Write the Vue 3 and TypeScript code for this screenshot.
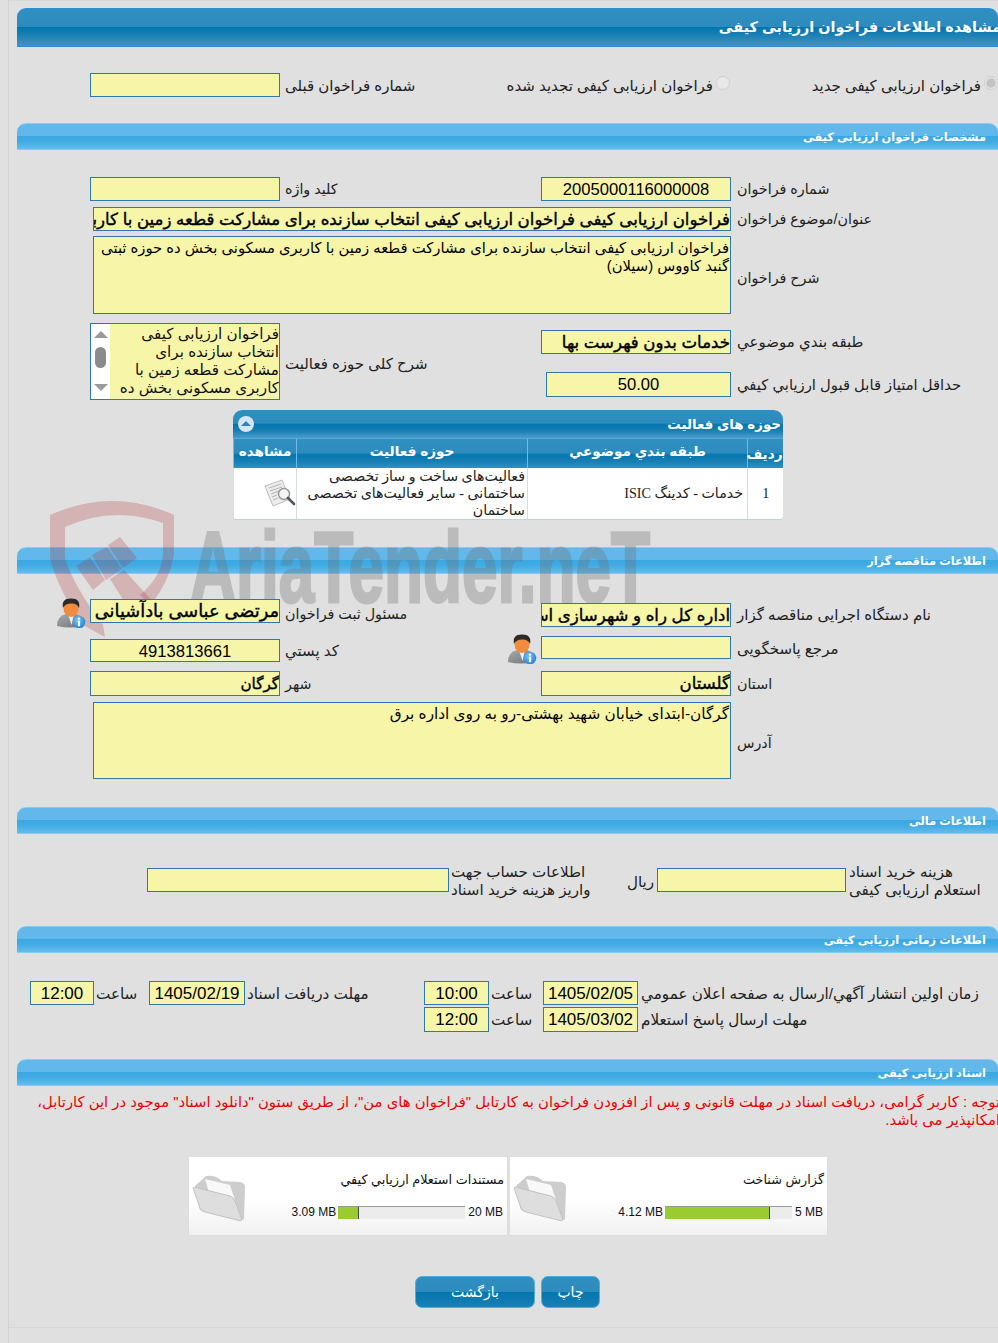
<script setup lang="ts">
interface Doc { title: string; used: string; max: string; pct: number }
const docs: Doc[] = [
  { title: 'مستندات استعلام ارزیابي کیفي', used: '3.09 MB', max: '20 MB', pct: 16.5 },
  { title: 'گزارش شناخت', used: '4.12 MB', max: '5 MB', pct: 83 }
]
</script>

<template>
  <div class="page">
    <div class="frame">
      <div class="band band-main"><span class="main-title">مشاهده اطلاعات فراخوان ارزیابی کیفی</span></div>

      <div class="radios">
        <div class="prev">
          <div class="field w190"></div>
          <span class="label ml5 fs15 nudge">شماره فراخوان قبلی</span>
        </div>
        <div class="radio-opt r2"><span class="radio"></span><span>فراخوان ارزیابی کیفی تجدید شده</span></div>
        <div class="radio-opt r1"><span class="radio on"></span><span>فراخوان ارزیابی کیفی جدید</span></div>
      </div>

      <div class="band band-light"><span>مشخصات فراخوان ارزیابی کیفی</span></div>

      <div class="halves mt27">
        <div class="half-l"><div class="field w190"></div><span class="label ml5">کلید واژه</span></div>
        <div class="half-r"><div class="field w190 num">2005000116000008</div><span class="label ml6">شماره فراخوان</span></div>
      </div>
      <div class="wide mt6">
        <div class="field wide-field bold">فراخوان ارزیابی کیفی فراخوان ارزیابی کیفی انتخاب سازنده برای مشارکت قطعه زمین با کاربری مسکونی</div>
        <span class="label ml6">عنوان/موضوع فراخوان</span>
      </div>
      <div class="wide mt5">
        <div class="field wide-field area tight">فراخوان ارزیابی کیفی انتخاب سازنده برای مشارکت قطعه زمین با کاربری مسکونی بخش ده حوزه ثبتی گنبد کاووس (سیلان)</div>
        <span class="label ml6 low">شرح فراخوان</span>
      </div>

      <div class="halves mt9 h77">
        <div class="half-l center">
          <div class="listbox">
            <div class="sb">
              <i class="arr up"></i>
              <i class="thumb"></i>
              <i class="arr down"></i>
            </div>
            <div class="lb-text">فراخوان ارزیابی کیفی<br />انتخاب سازنده برای<br />مشارکت قطعه زمین با<br />کاربری مسکونی بخش ده</div>
          </div>
          <span class="label ml5 fs15 low">شرح کلی حوزه فعالیت</span>
        </div>
        <div class="half-stack">
          <div class="half-r mt7"><div class="field w190 bold">خدمات بدون فهرست بها</div><span class="label ml6 fs15">طبقه بندي موضوعي</span></div>
          <div class="half-r mt18"><div class="field w185 num h25f">50.00</div><span class="label ml6 fs148">حداقل امتياز قابل قبول ارزيابي کيفي</span></div>
        </div>
      </div>

      <div class="grid-box">
        <div class="grid-title">
          <span class="collapse"><i></i></span>
          <span>حوزه های فعالیت</span>
        </div>
        <table class="grid-table">
          <colgroup>
            <col class="c1" /><col class="c2" /><col class="c3" /><col class="c4" />
          </colgroup>
          <thead>
            <tr>
              <th>مشاهده</th>
              <th class="th-c">حوزه فعالیت</th>
              <th class="th-c">طبقه بندي موضوعي</th>
              <th class="th-r">ردیف</th>
            </tr>
          </thead>
          <tbody>
            <tr>
              <td class="td-icon">
                <svg class="doc-icon" viewBox="0 0 32 30" width="32" height="30">
                  <path d="M1 7 L18 1 L26 20 L9 27 Z" fill="#ececec" stroke="#bdbdbd" />
                  <path d="M5 9 L17 5 M6 12 L18 8 M7 15 L15 12 M8 18 L13 16 M9 21 L14 19" stroke="#b5b5b5" stroke-width="1" />
                  <circle cx="20" cy="15" r="5.5" fill="#f4f4f4" stroke="#9a9a9a" stroke-width="1.5" />
                  <path d="M24 19 L30 25" stroke="#555" stroke-width="2.6" stroke-linecap="round" />
                </svg>
              </td>
              <td class="td-text">فعالیت‌های ساخت و ساز تخصصی ساختمانی - سایر فعالیت‌های تخصصی ساختمان</td>
              <td class="td-text td-mid">خدمات - کدینگ ISIC</td>
              <td class="td-num">1</td>
            </tr>
          </tbody>
        </table>
      </div>

      <div class="band band-light mt28"><span>اطلاعات مناقصه گزار</span></div>

      <div class="halves">
        <div class="stack-l">
          <div class="half-l mt25">
            <svg class="person pl" viewBox="0 0 30 30" width="30" height="30">
              <use href="#person-shape" />
            </svg>
            <div class="field w190 bold name">مرتضی عباسی بادآشیانی</div>
            <span class="label ml5 low">مسئول ثبت فراخوان</span>
          </div>
          <div class="half-l mt16"><div class="field w190 num h23f">4913813661</div><span class="label ml5 fs15">کد پستي</span></div>
          <div class="half-l mt9"><div class="field w190 bold h25f city">گرگان</div><span class="label ml5">شهر</span></div>
        </div>
        <div class="stack-r">
          <div class="half-r mt29"><div class="field w190 bold">اداره کل راه و شهرسازی استان گلستان</div><span class="label ml6 fs15">نام دستگاه اجرایی مناقصه گزار</span></div>
          <div class="half-r mt9">
            <svg class="person pr" viewBox="0 0 30 30" width="30" height="30">
              <defs>
                <linearGradient id="suit-grad" x1="0" y1="0" x2="1" y2="1">
                  <stop offset="0" stop-color="#a8abad" />
                  <stop offset="1" stop-color="#6e7274" />
                </linearGradient>
                <radialGradient id="info-grad" cx=".4" cy=".35" r=".7">
                  <stop offset="0" stop-color="#7cc4f6" />
                  <stop offset="1" stop-color="#1f7fd6" />
                </radialGradient>
                <g id="person-shape">
                  <path d="M1 28 Q1 18 10 16 L20 16 Q27 18 28 28 Q14 31 1 28 Z" fill="url(#suit-grad)" />
                  <path d="M12 16 L18 16 L15.5 27 Z" fill="#eef1f3" />
                  <ellipse cx="15" cy="10.5" rx="7.5" ry="8.5" fill="#f28b3e" />
                  <path d="M7 10 Q5 0.5 15 0.5 Q25 0.5 23 10 Q21 5 15 5.5 Q9 5.5 7 10 Z" fill="#2e2a28" />
                  <circle cx="23" cy="24" r="6.3" fill="url(#info-grad)" />
                  <circle cx="23" cy="20.6" r="1.2" fill="#fff" />
                  <rect x="21.9" y="22.6" width="2.2" height="5.6" fill="#fff" />
                </g>
              </defs>
              <use href="#person-shape" />
            </svg>
            <div class="field w190 h23f"></div><span class="label ml6 fs15 nudge">مرجع پاسخگویی</span>
          </div>
          <div class="half-r mt12"><div class="field w190 bold h25f">گلستان</div><span class="label ml6">استان</span></div>
        </div>
      </div>

      <div class="wide mt6">
        <div class="field wide-field area h77f">گرگان-ابتدای خیابان شهید بهشتی-رو به روی اداره برق</div>
        <span class="label ml6 low">آدرس</span>
      </div>

      <div class="band band-light mt28"><span>اطلاعات مالی</span></div>

      <div class="finance">
        <i></i>
        <div class="field f302"></div>
        <span class="label fl1">اطلاعات حساب جهت<br />واریز هزینه خرید اسناد</span>
        <span class="label rial">ریال</span>
        <div class="field f189"></div>
        <span class="label fl2">هزینه خرید اسناد<br />استعلام ارزیابی کیفی</span>
      </div>

      <div class="band band-light"><span>اطلاعات زمانی ارزیابی کیفی</span></div>

      <div class="times mt28">
        <i></i>
        <div class="field num">12:00</div>
        <span class="label tl">ساعت</span>
        <div class="field num">1405/02/19</div>
        <span class="label tl">مهلت دریافت اسناد</span>
        <div class="field num">10:00</div>
        <span class="label tl">ساعت</span>
        <div class="field num">1405/02/05</div>
        <span class="label tl t-last">زمان اولین انتشار آگهي/ارسال به صفحه اعلان عمومي</span>
      </div>
      <div class="times mt2">
        <i></i><i></i><i></i><i></i><i></i>
        <div class="field num h25f">12:00</div>
        <span class="label tl">ساعت</span>
        <div class="field num h25f">1405/03/02</div>
        <span class="label tl t-last">مهلت ارسال پاسخ استعلام</span>
      </div>

      <div class="band band-light mt27"><span>اسناد ارزیابی کیفی</span></div>

      <p class="notice">توجه : کاربر گرامی، دریافت اسناد در مهلت قانونی و پس از افزودن فراخوان به کارتابل "فراخوان های من"، از طریق ستون "دانلود اسناد" موجود در این کارتابل، امکانپذیر می باشد.</p>

      <div class="cards">
        <div v-for="d in docs" :key="d.title" class="card">
          <svg class="folder" viewBox="0 0 56 50" width="56" height="50">
            <path d="M3 13 L14 3 Q24 2 30 8 L48 9 Q53 10 53 14 L52 46 Q50 48 46 46 L10 38 Q7 37 7 33 Z" fill="#cdcdcd" />
            <path d="M13 6 L38 12 L46 36 L20 30 Z" fill="#f8f8f8" />
            <path d="M1 15 Q3 13 6 15 L38 23 Q41 24 43 28 L50 47 Q48 48 45 47 L13 39 Q9 38 8 35 Z" fill="#dedede" stroke="#c2c2c2" stroke-width="1" />
          </svg>
          <div class="card-body">
            <div class="card-title">{{ d.title }}</div>
            <div class="meter">
              <span class="m-val">{{ d.used }}</span>
              <div class="bar"><div class="bar-fill" :style="{ width: d.pct + '%' }"></div></div>
              <span class="m-val m-max">{{ d.max }}</span>
            </div>
          </div>
        </div>
      </div>

      <div class="buttons">
        <button class="btn btn-back" type="button">بازگشت</button>
        <button class="btn btn-print" type="button">چاپ</button>
      </div>

      <div class="foot-line"></div>

      <svg class="watermark" viewBox="0 0 620 150" width="620" height="150">
        <g fill="#b02a30" fill-opacity=".25">
          <path d="M10 20 Q73 -8 134 20 L134 60 Q128 90 110 110 L100 100 Q123 80 123 58 L123 28 Q73 10 25 32 L25 63 Q33 90 63 130 L65 142 L43 130 Q18 95 10 63 Z" />
          <path d="M36 71 L50 62 L65 85 L53 95 Z" />
          <path d="M52 60 L67 52 L82 74 L66 85 Z" />
          <path d="M68 50 L80 42 L97 63 L83 73 Z" />
          <path d="M70 84 L84 75 L118 112 L98 128 Z" />
        </g>
        <text x="150" y="107" class="wm-text" textLength="460" lengthAdjust="spacingAndGlyphs">AriaTender.neT</text>
      </svg>
    </div>
  </div>
</template>

<style>
html, body { margin: 0; background: #e0e0e0; }
</style>

<style scoped>
.page {
  width: 998px;
  height: 1343px;
  overflow: hidden;
  background: #e0e0e0;
  font-family: "Liberation Sans", "DejaVu Sans", sans-serif;
  font-size: 14.3px;
  color: #222;
}
.frame {
  position: relative;
  box-sizing: border-box;
  height: 1343px;
  margin-left: 8px;
  padding: 8px 0 0 8px;
  border-left: 1px solid #d2d2d2;
  border-top: 1px solid #d8d8d8;
}
.band {
  box-sizing: border-box;
  display: flex;
  justify-content: flex-start;
  align-items: center;
  color: #fff;
  font-weight: bold;
  direction: rtl;
  border-radius: 9px 9px 0 0;
}
.band-main {
  height: 39px;
  margin-top: -1px;
  font-size: 14.4px;
  overflow: hidden;
  background: linear-gradient(#2f8fc0 0, #2d8cbd 48%, #0376b0 50%, #1a80b4 70%, #4694bd 100%);
  border-top: 1px solid #2a8fe0;
  border-bottom: 1px solid #2a8fe0;
}
.main-title { margin: -1px -3px 0 0; }
.band-light {
  height: 27px;
  font-size: 11.4px;
  padding-right: 12px;
  background: linear-gradient(#62b8ea 0, #62b8ea 46%, #3aa8e3 50%, #42abe4 70%, #66bbea 100%);
  border-top: 1px solid #7fd0f0;
  border-bottom: 1px solid #7fcfee;
}

.label { direction: rtl; text-align: left; white-space: nowrap; line-height: 18px; }
.fs15 { font-size: 15px; }
.fs148 { font-size: 14.8px; }
.low { margin-top: 5px; }
.nudge { margin-top: 2px; }
.ml5 { margin-left: 5px; }
.ml6 { margin-left: 6px; }
.mt2 { margin-top: 2px; }
.mt5 { margin-top: 5px; }
.mt6 { margin-top: 6px; }
.mt7 { margin-top: 7px; }
.mt9 { margin-top: 9px; }
.mt12 { margin-top: 12px; }
.mt16 { margin-top: 16px; }
.mt18 { margin-top: 18px; }
.mt25 { margin-top: 25px; }
.mt27 { margin-top: 27px; }
.mt28 { margin-top: 28px; }
.mt29 { margin-top: 29px; }
.h77 { height: 77px; }

.field {
  position: relative;
  z-index: 1;
  box-sizing: border-box;
  height: 24px;
  line-height: 23px;
  background: #f7f5a8;
  border: 1px solid #2a7ab0;
  direction: rtl;
  text-align: right;
  white-space: nowrap;
  overflow: hidden;
  color: #000;
  font-size: 15.3px;
}
.h25f { height: 25px; }
.h23f { height: 23px; }
.w190 { width: 190px; }
.w185 { width: 185px; }
.bold {
  font-size: 16.6px;
  -webkit-text-stroke: .4px #000;
}
.bold.name { font-size: 17.8px; }
.bold.city { font-size: 15.2px; }
.num { text-align: center; font-size: 16.6px; }

.radios {
  position: relative;
  height: 76px;
  box-sizing: border-box;
  padding-top: 26px;
}
.prev { display: flex; align-items: center; margin-left: 73px; }
.radio-opt {
  position: absolute;
  top: 29px;
  display: flex;
  flex-direction: row-reverse;
  direction: ltr;
  gap: 3px;
  white-space: nowrap;
  line-height: 18px;
  font-size: 15px;
}
.r1 { right: 0; }
.r2 { right: 268px; }
.radio-opt span:last-child { direction: rtl; margin-top: 1px; }
.radio {
  flex: none;
  box-sizing: border-box;
  width: 14px;
  height: 14px;
  margin-top: 0;
  border-radius: 50%;
  background: #e9e9e9;
  border: 1px solid #d0d0d0;
}
.radio.on { background: radial-gradient(circle, #c4c4c4 0 50%, #e4e4e4 60%); }

.halves { display: flex; }
.half-l { width: 488px; display: flex; align-items: center; padding-left: 73px; box-sizing: border-box; position: relative; }
.half-r { display: flex; align-items: center; padding-left: 36px; position: relative; }
.half-stack, .stack-r { width: 493px; }
.half-stack .half-r:last-child { padding-left: 41px; }
.center { align-items: center; }
.stack-l { width: 488px; }

.wide { display: flex; align-items: center; padding-left: 76px; }
.wide-field { width: 638px; }
.wide-field.area {
  height: 78px;
  white-space: normal;
  line-height: 18px;
  padding: 2px 1px;
}
.wide-field.area.tight { font-size: 14.8px; }
.wide-field.area.h77f { height: 77px; }

.listbox {
  box-sizing: border-box;
  width: 190px;
  height: 77px;
  display: flex;
  border: 1px solid #2a7ab0;
  background: #f7f5a8;
}
.sb { width: 19px; background: #fff; position: relative; flex: none; }
.sb i { position: absolute; display: block; }
.thumb { left: 4px; top: 23px; width: 11px; height: 21px; border-radius: 6px; background: #8b8b8b; }
.arr { left: 3px; width: 0; height: 0; border-left: 7px solid transparent; border-right: 7px solid transparent; }
.arr.up { top: 7px; border-bottom: 7px solid #999; }
.arr.down { top: 60px; border-top: 7px solid #999; }
.lb-text { flex: 1; direction: rtl; text-align: right; line-height: 18px; color: #111; white-space: nowrap; font-size: 15.2px; margin-top: 1px; }

.grid-box {
  width: 550px;
  margin: 10px 0 0 216px;
  box-sizing: border-box;
  height: 109px;
  border-radius: 9px 9px 3px 3px;
  overflow: hidden;
  box-shadow: 0 1px 0 #b9d3e6;
  background: #fff;
}
.grid-title {
  height: 28px;
  display: flex;
  justify-content: space-between;
  align-items: center;
  padding: 0 2px 0 5px;
  color: #fff;
  font-weight: bold;
  font-size: 13.4px;
  direction: ltr;
  background: linear-gradient(#2f8fc0 0, #2d8cbd 46%, #0376b0 52%, #1a80b4 75%, #4a9cc9 100%);
}
.grid-title span:last-child { direction: rtl; }
.collapse {
  width: 16px;
  height: 16px;
  border-radius: 50%;
  background: #d5e6f4;
  display: flex;
  align-items: center;
  justify-content: center;
}
.collapse i {
  width: 0;
  height: 0;
  margin-top: -2px;
  border-left: 5px solid transparent;
  border-right: 5px solid transparent;
  border-bottom: 5px solid #2a86bd;
}
.grid-table {
  width: 550px;
  table-layout: fixed;
  border-collapse: collapse;
  direction: ltr;
}
.c1 { width: 63px; }
.c2 { width: 231px; }
.c3 { width: 220px; }
.c4 { width: 36px; }
.grid-table th {
  height: 29px;
  padding: 0 1px 5px;
  box-sizing: border-box;
  color: #fff;
  font-size: 13.6px;
  direction: rtl;
  background: linear-gradient(#2f8fc0 0, #2d8cbd 46%, #0376b0 52%, #1a80b4 78%, #2f94c8 100%);
  border-left: 1px solid #6bbcea;
  border-top: 1px solid #56a8da;
}
.grid-table th:first-child { border-left-color: #6bbcea; text-align: center; }
.th-c { text-align: center; }
.grid-table th.th-r { text-align: right; padding: 2px 1px 0 0; }
.grid-table td {
  height: 52px;
  padding: 0 2px;
  border-left: 1px solid #d6dde2;
  font-family: "Liberation Serif", "DejaVu Sans", serif;
  font-size: 14.2px;
  line-height: 17px;
  color: #222;
  vertical-align: middle;
}
.td-icon { text-align: right; }
.doc-icon { display: block; margin-left: 28px; }
.td-text { direction: rtl; text-align: right; }
.grid-table td.td-mid { padding-right: 4px; }
.td-num { text-align: center; }

.person { position: absolute; z-index: 1; }
.pl { left: 39px; top: -1px; }
.pr { left: 2px; top: -2px; }

.finance {
  display: grid;
  grid-template-columns: 130px 302px 179px 29px 189px 1fr;
  align-items: center;
  height: 92px;
  font-size: 15.1px;
}
.fl1 { margin: 2px 0 0 2px; }
.fl2 { margin: 2px 0 0 3px; }
.rial { margin-left: -1px; margin-top: 4px; }
.f302, .f189 { width: 100%; }

.times {
  display: grid;
  grid-template-columns: 13px 64px 55px 96px 179px 65px 54px 95px 1fr;
  align-items: center;
  font-size: 15.2px;
}
.times .field { font-size: 17px; }
.tl { margin: 1px 0 0 2px; }
.t-last { margin-left: 3px; }

.notice {
  direction: rtl;
  text-align: right;
  margin: 7px -2px 0 0;
  color: #f00000;
  font-size: 14.8px;
  line-height: 18px;
  padding: 0 0 0 10px;
}
.cards { display: flex; gap: 3px; margin: 28px 0 0 172px; }
.card {
  box-sizing: border-box;
  width: 318px;
  height: 78px;
  display: flex;
  padding: 16px 3px 0 3px;
  background: linear-gradient(#fff 0, #fff 55%, #f1f1f1 100%);
  box-shadow: 0 0 1px #cfcfcf;
}
.card:last-child { width: 317px; }
.folder { flex: none; }
.card-body { flex: 1; display: flex; flex-direction: column; align-items: flex-end; }
.card-title { direction: rtl; font-size: 12.8px; line-height: 18px; color: #111; white-space: nowrap; margin-top: -2px; }
.meter { display: flex; align-items: center; gap: 2px; margin-top: 16px; height: 14px; font-size: 12px; color: #111; padding-right: 1px; }
.m-val { white-space: nowrap; }
.m-max { margin-left: 1px; }
.bar { width: 127px; height: 13px; background: #ececec; border-top: 1px solid #999; box-sizing: border-box; }
.bar-fill { height: 100%; background: #9acc2f; border-right: 1px solid #444; box-sizing: border-box; }

.buttons { display: flex; gap: 6px; margin: 41px 0 0 398px; }
.btn {
  height: 32px;
  padding: 0;
  border: 1px solid #4cb0dc;
  border-radius: 7px;
  color: #fff;
  font: 14px "Liberation Sans", "DejaVu Sans", sans-serif;
  direction: rtl;
  background: linear-gradient(#2f8fc0 0, #2d8cbd 49%, #0376b0 51%, #1a80b4 100%);
}
.btn-back { width: 120px; }
.btn-print { width: 59px; }
.foot-line { height: 1px; background: #d6d6d6; margin: 19px 0 0 -8px; }

.watermark {
  position: absolute;
  left: 31px;
  top: 494px;
  pointer-events: none;
}
.wm-text {
  font-family: "Liberation Sans", sans-serif;
  font-weight: bold;
  font-size: 100px;
  fill: #707070;
  stroke: #707070;
  stroke-width: 3px;
  opacity: .32;
}
</style>
